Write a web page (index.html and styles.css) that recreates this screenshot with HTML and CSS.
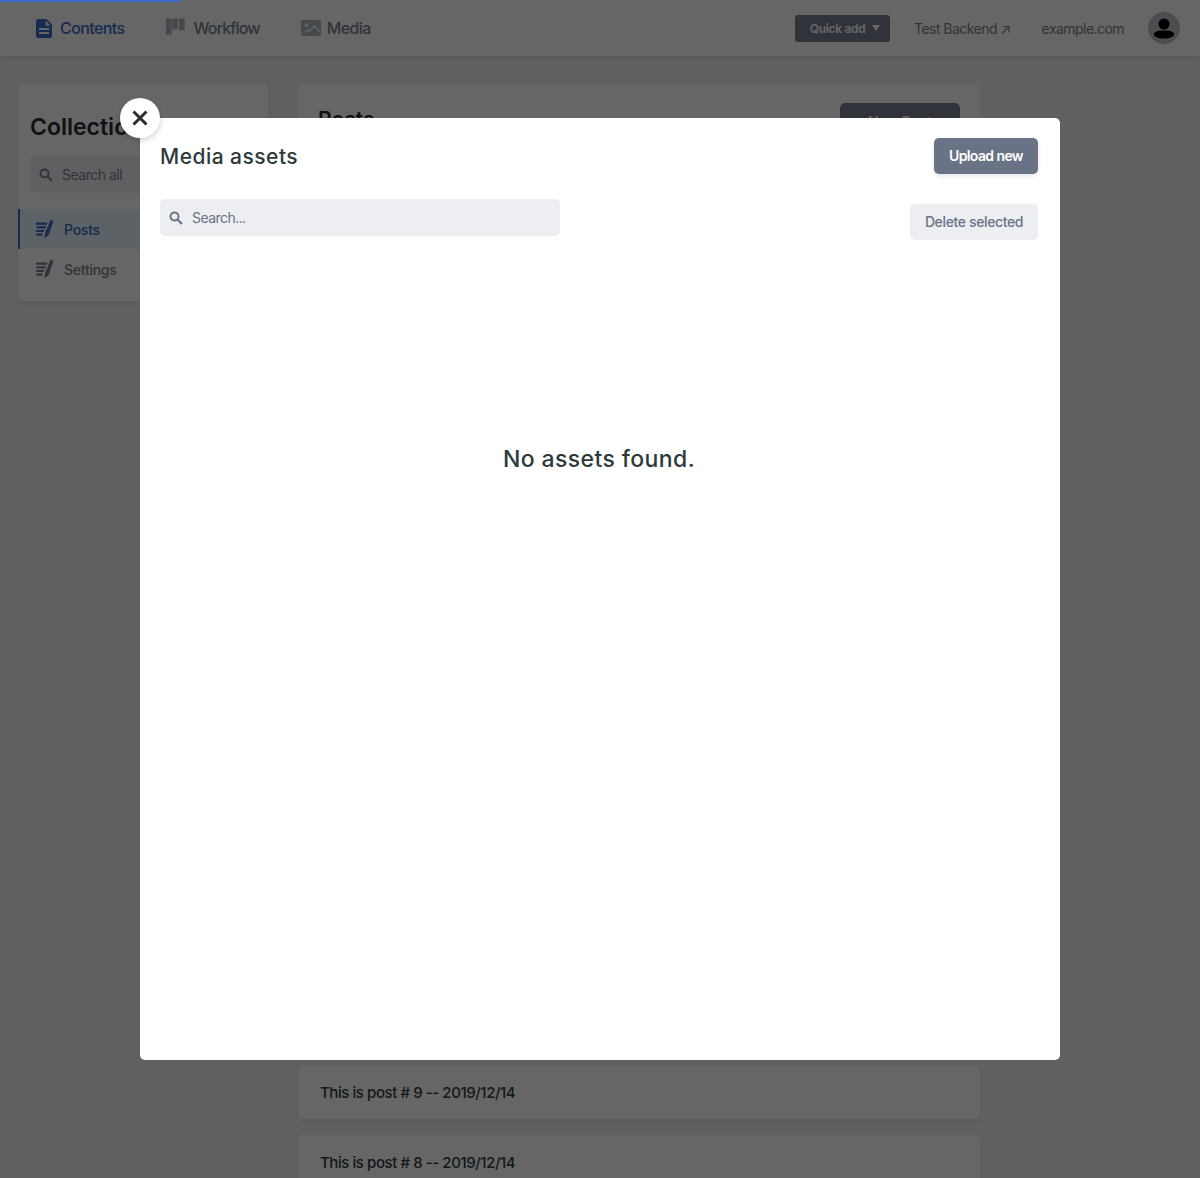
FILE: index.html
```html
<!DOCTYPE html>
<html lang="en">
<head>
  <meta charset="UTF-8" />
  <title>Media assets</title>
  <link rel="stylesheet" href="styles.css">
</head>
<body>

  <!-- TOP BAR -->
  <header class="topbar">
    <nav class="nav">
      <a class="nav-link active">
        <svg width="24" height="24" viewBox="0 0 24 24"><path fill="currentColor" fill-rule="evenodd" d="M6 3h8.500L20 8.500V20a2 2 0 0 1-2 2H6a2 2 0 0 1-2-2V5a2 2 0 0 1 2-2zm7.500 1.500V9.500h5zM7 12v2h10v-2zm0 4v2h10v-2z"/></svg>
        Contents
      </a>
      <a class="nav-link nav-workflow">
        <svg class="nav-icon" width="24" height="24" viewBox="0 0 24 24"><path fill="currentColor" d="M2 2.500h5.700v15.700a.5.5 0 0 1-.5.5H2.500a.5.5 0 0 1-.5-.5zM8.300 2.500h5.400v10.700H8.300zM15 2.500h5.700v11.700H15z"/></svg>
        Workflow
      </a>
      <a class="nav-link">
        <svg class="nav-icon" width="24" height="24" viewBox="0 0 24 24"><path fill="currentColor" d="M4 4h16a2 2 0 0 1 2 2v12a2 2 0 0 1-2 2H4a2 2 0 0 1-2-2V6a2 2 0 0 1 2-2z"/><circle cx="7.500" cy="9" r="2" fill="#eef0f3"/><path d="M4 17l4.500-3 2 1.500L15.500 10l5 6" fill="none" stroke="#eef0f3" stroke-width="1.500"/></svg>
        Media
      </a>
    </nav>
    <div class="topbar-right">
      <button class="quick-add">Quick add <span class="caret"></span></button>
      <a class="top-link">Test Backend ↗</a>
      <a class="top-link site">example.com</a>
      <span class="avatar">
        <svg width="32" height="32" viewBox="0 0 32 32"><circle cx="16" cy="12" r="5.500"/><path d="M6 22c0-2 3-3.500 10-3.500S26 20 26 22c0 3-4 4.500-10 4.500S6 25 6 22z"/></svg>
      </span>
    </div>
  </header>

  <div class="page">
    <!-- SIDEBAR -->
    <aside class="sidebar">
      <h2>Collections</h2>
      <div class="side-search">
        <svg class="search-icon" width="14" height="14" viewBox="0 0 14 14"><circle cx="5.500" cy="5.500" r="4" fill="none" stroke="currentColor" stroke-width="2"/><path d="M8.500 8.500L13 13" stroke="currentColor" stroke-width="2.200"/></svg>
        Search all
      </div>
      <a class="side-link active">
        <svg width="20" height="20" viewBox="0 0 20 20"><path fill="currentColor" d="M2 3.500h11.500l-.6 2.200H2zM2.500 7.200h9.700l-.7 2.200H2.500zM2 10.900h8.500l-.8 2.200H2zM2.500 14.500h6.200l-.7 2.200H2.500zM16.500 1c1.700-.6 2.900.6 2.500 2.300l-4.200 12.400-3.800 3.300-.4-.4.700-5z"/></svg>
        Posts
      </a>
      <a class="side-link">
        <svg width="20" height="20" viewBox="0 0 20 20"><path fill="currentColor" d="M2 3.500h11.500l-.6 2.200H2zM2.500 7.200h9.700l-.7 2.200H2.500zM2 10.900h8.500l-.8 2.200H2zM2.500 14.500h6.200l-.7 2.200H2.500zM16.500 1c1.700-.6 2.900.6 2.500 2.300l-4.200 12.400-3.800 3.300-.4-.4.700-5z"/></svg>
        Settings
      </a>
    </aside>

    <!-- POSTS -->
    <main class="posts">
      <div class="posts-head">
        <h1>Posts</h1>
        <button class="new-post">New Post</button>
      </div>
      <div class="post-list">
        <div class="post">This is post # 20 -- 2019/12/14</div>
        <div class="post">This is post # 19 -- 2019/12/14</div>
        <div class="post">This is post # 18 -- 2019/12/14</div>
        <div class="post">This is post # 17 -- 2019/12/14</div>
        <div class="post">This is post # 16 -- 2019/12/14</div>
        <div class="post">This is post # 15 -- 2019/12/14</div>
        <div class="post">This is post # 14 -- 2019/12/14</div>
        <div class="post">This is post # 13 -- 2019/12/14</div>
        <div class="post">This is post # 12 -- 2019/12/14</div>
        <div class="post">This is post # 11 -- 2019/12/14</div>
        <div class="post">This is post # 10 -- 2019/12/14</div>
        <div class="post">This is post # 9 -- 2019/12/14</div>
        <div class="post">This is post # 8 -- 2019/12/14</div>
      </div>
    </main>
  </div>

  <div class="overlay"></div>
  <div class="progress"></div>

  <!-- MEDIA LIBRARY -->
  <section class="modal">
    <button class="close" aria-label="Close">
      <svg width="18" height="18" viewBox="0 0 18 18"><path d="M2.500 2.500l13 13M15.500 2.500l-13 13" stroke="#2a2c33" stroke-width="3" fill="none"/></svg>
    </button>
    <div class="modal-head">
      <h2>Media assets</h2>
      <button class="upload">Upload new</button>
    </div>
    <div class="modal-tools">
      <div class="modal-search">
        <svg class="search-icon" width="14" height="14" viewBox="0 0 14 14"><circle cx="5.500" cy="5.500" r="4" fill="none" stroke="currentColor" stroke-width="2"/><path d="M8.500 8.500L13 13" stroke="currentColor" stroke-width="2.200"/></svg>
        <input type="text" placeholder="Search...">
      </div>
      <button class="delete">Delete selected</button>
    </div>
    <div class="empty">No assets found.</div>
  </section>

</body>
</html>
```

FILE: styles.css
```css
* {
  box-sizing: border-box;
}

html, body {
  height: 100%;
}

body {
  font-family: 'Inter', sans-serif;
  background-color: #eff0f4;
  color: #313d3e;
  margin: 0;
  height: 1178px;
  overflow: hidden;
  font-size: 14px;
}

button {
  font-family: inherit;
  border: none;
}

.topbar {
  height: 56px;
  background-color: #fff;
  box-shadow: 0 2px 4px rgba(68,74,87,0.15);
  display: flex;
  justify-content: space-between;
  align-items: center;
  padding: 0 20px 0 32px;
}

.nav {
  display: flex;
  gap: 39px;
}

.nav-link {
  display: flex;
  align-items: center;
  gap: 4px;
  font-size: 16px;
  font-weight: 500;
  letter-spacing: -0.6px;
  color: #798291;
}

.nav-link.active {
  color: #3a69c7;
}

.nav-workflow {
  margin-left: 1px;
  gap: 5px;
  letter-spacing: -0.85px;
}

.nav-icon {
  color: #adb3be;
}

.topbar-right {
  display: flex;
  align-items: center;
}

.quick-add {
  height: 27px;
  width: 95px;
  margin-right: 24px;
  padding: 0 0 0 5px;
  background-color: #798291;
  color: #fff;
  font-size: 12px;
  font-weight: 600;
  letter-spacing: -0.3px;
  border-radius: 3px;
  display: flex;
  align-items: center;
  justify-content: center;
  gap: 7px;
}

.caret {
  width: 0;
  height: 0;
  border-left: 4.500px solid transparent;
  border-right: 4.500px solid transparent;
  border-top: 6px solid currentColor;
}

.top-link {
  font-size: 14px;
  letter-spacing: -0.55px;
  color: #798291;
}

.site {
  margin-left: 31px;
  margin-right: 24px;
}

.avatar {
  width: 32px;
  height: 32px;
  border-radius: 50%;
  background-color: #bcc0c8;
  color: #313d3e;
  display: block;
}

.avatar svg {
  display: block;
}

.page {
  display: flex;
  align-items: flex-start;
  gap: 30px;
  padding: 28px 0 0 18px;
}

.sidebar {
  width: 250px;
  height: 217px;
  flex: none;
  background-color: #fff;
  border-radius: 5px;
  box-shadow: 0 2px 4px rgba(68,74,87,0.1);
  padding-top: 29px;
}

.sidebar h2 {
  margin: 0 0 15px 12px;
  font-size: 23px;
  line-height: 28px;
  font-weight: 600;
  color: #2a2c33;
}

.side-search {
  margin: 0 12px 16px;
  height: 37px;
  background-color: #eff0f4;
  border-radius: 5px;
  display: flex;
  align-items: center;
  gap: 9px;
  padding-left: 9px;
  letter-spacing: -0.5px;
  color: #798291;
}

.side-link {
  height: 40px;
  display: flex;
  align-items: center;
  gap: 10px;
  padding-left: 14px;
  font-weight: 500;
  letter-spacing: -0.25px;
  color: #798291;
  border-left: 2px solid transparent;
}

.side-link.active {
  background-color: #e8f5fe;
  color: #3a69c7;
  border-left-color: #3a69c7;
}

.posts {
  width: 682px;
  flex: none;
}

.posts-head {
  height: 141px;
  background-color: #fff;
  border-radius: 5px;
  display: flex;
  justify-content: space-between;
  align-items: flex-start;
  padding: 19px 20px;
  margin-bottom: 70px;
}

.posts-head h1 {
  margin: 4px 0 0;
  font-size: 21px;
  line-height: 26px;
  font-weight: 600;
  color: #2a2c33;
}

.new-post {
  width: 120px;
  height: 36px;
  background-color: #798291;
  color: #fff;
  border-radius: 5px;
  font-size: 14px;
  font-weight: 600;
}

.post-list {
  display: flex;
  flex-direction: column;
  gap: 16px;
}

.post {
  height: 54px;
  flex: none;
  background-color: #fff;
  border-radius: 5px;
  box-shadow: 0 2px 4px rgba(68,74,87,0.1);
  padding: 0 22px;
  display: flex;
  align-items: center;
  font-size: 15px;
  font-weight: 500;
  letter-spacing: -0.43px;
  color: #313d3e;
}

.overlay {
  position: fixed;
  inset: 0;
  background-color: rgba(0,0,0,0.6);
}

.progress {
  position: fixed;
  top: 0;
  left: 0;
  width: 181px;
  height: 2px;
  background-color: #3a69c7;
}

.modal {
  position: fixed;
  left: 140px;
  top: 118px;
  width: 920px;
  height: 942px;
  background-color: #fff;
  border-radius: 5px;
  padding: 20px 22px 0 20px;
  display: flex;
  flex-direction: column;
}

.close {
  position: absolute;
  left: -20px;
  top: -20px;
  width: 40px;
  height: 40px;
  border-radius: 50%;
  background-color: #fff;
  box-shadow: 0 2px 6px rgba(0,0,0,0.2);
  padding: 0;
  display: flex;
  align-items: center;
  justify-content: center;
}

.modal-head {
  display: flex;
  justify-content: space-between;
  align-items: center;
  height: 36px;
}

.modal-head h2 {
  margin: 1px 0 0;
  font-size: 21px;
  font-weight: 500;
  letter-spacing: 0.47px;
  color: #2d3a3b;
}

.upload {
  width: 104px;
  height: 36px;
  padding: 0 0 2px;
  background-color: #6a7385;
  color: #fff;
  font-size: 14px;
  font-weight: 600;
  letter-spacing: -0.6px;
  border-radius: 5px;
  box-shadow: 0 2px 4px rgba(68,74,87,0.15);
}

.modal-tools {
  display: flex;
  justify-content: space-between;
  align-items: flex-start;
  margin-top: 25px;
}

.modal-search {
  width: 400px;
  height: 37px;
  background-color: #eceef2;
  border-radius: 5px;
  display: flex;
  align-items: center;
  gap: 9px;
  padding-left: 9px;
  color: #6a7385;
}

.modal-search input {
  flex: 1;
  border: none;
  outline: none;
  background: none;
  font-family: inherit;
  font-size: 14px;
  padding: 0;
  letter-spacing: -0.55px;
}

.modal-search input::placeholder {
  color: #6a7385;
  opacity: 1;
}

.delete {
  width: 128px;
  height: 36px;
  margin-top: 5px;
  padding: 0 0 2px;
  background-color: #eceef2;
  color: #6a7385;
  font-size: 14px;
  font-weight: 500;
  letter-spacing: -0.37px;
  border-radius: 5px;
}

.empty {
  margin-top: 204px;
  text-align: center;
  font-size: 23px;
  line-height: 30px;
  font-weight: 500;
  letter-spacing: 0.4px;
  color: #2d3a3b;
}

.search-icon {
  flex: none;
}
```
